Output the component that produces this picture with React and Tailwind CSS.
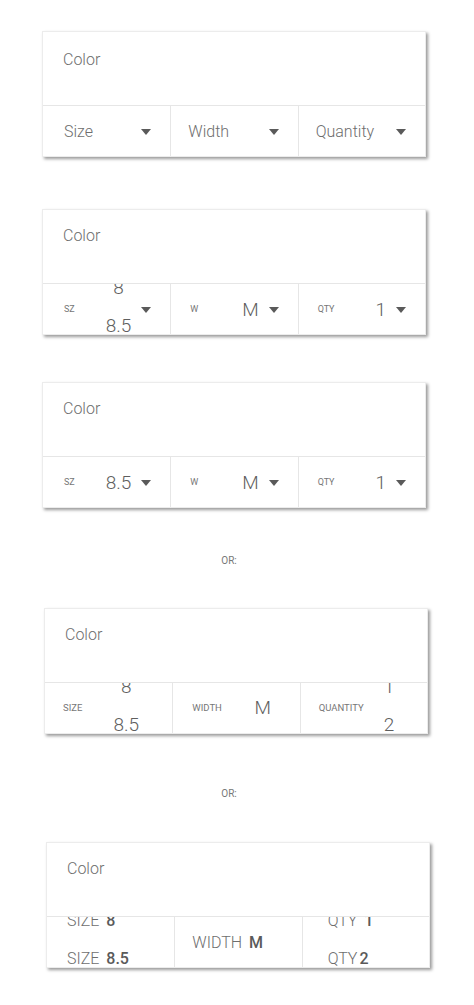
import React from "react";

const font = "font-['Roboto',_'Liberation_Sans',_sans-serif]";

function Caret() {
  return (
    <svg width="10" height="6" viewBox="0 0 10 6" className="shrink-0">
      <polygon points="0,0 10,0 5,6" fill="#5a5a5a" />
    </svg>
  );
}

function Card({ className = "", pad = "pt-[16px]", children }) {
  return (
    <div
      className={`h-[126px] bg-white border border-[#ececec] shadow-[2px_2px_3px_rgba(0,0,0,0.4)] flex flex-col overflow-hidden ${className}`}
    >
      <div className={`h-[73px] shrink-0 pl-[20px] ${pad} text-[16px] leading-[19px] font-light text-[#6e6e6e]`}>
        Color
      </div>
      <div className="h-[51px] shrink-0 grid grid-cols-3 grid-rows-[51px] border-t border-[#e6e6e6]">
        {children}
      </div>
    </div>
  );
}

function Cell({ first, className = "", children }) {
  return (
    <div
      className={`relative h-[51px] min-h-0 overflow-hidden flex items-center ${first ? "" : "border-l border-[#e6e6e6]"} ${className}`}
    >
      {children}
    </div>
  );
}

// stacked values that spill past the row, like a picker wheel
function Wheel({ items, className = "" }) {
  return (
    <div className={`flex flex-col items-center -translate-y-[3px] ${className}`}>
      {items.map((v) => (
        <div key={v} className="h-[38px] leading-[38px] shrink-0">
          {v}
        </div>
      ))}
    </div>
  );
}

function Select({ first, label, items }) {
  return (
    <Cell first={first} className={`${first ? "pl-[21px]" : "pl-[19px]"} pr-[19px]`}>
      <span className="text-[9px] text-[#777] font-normal">{label}</span>
      <div className="ml-auto flex items-center gap-[10px] h-full">
        {items.length > 1 ? (
          <Wheel items={items} className="text-[19px] text-[#5e5e5e]" />
        ) : (
          <span className="text-[19px] text-[#5e5e5e] leading-none">{items[0]}</span>
        )}
        <Caret />
      </div>
    </Cell>
  );
}

export default function App() {
  return (
    <div className={`${font} bg-white min-h-[1005px] pt-[31px] font-light`}>
      {/* plain dropdowns */}
      <Card className="ml-[42px] w-[384px]" pad="pt-[18px]">
        {[
          ["Size", true],
          ["Width", false],
          ["Quantity", false],
        ].map(([t, first]) => (
          <Cell
            key={t}
            first={first}
            className={`${first ? "pl-[21px]" : "pl-[17px]"} pr-[19px] justify-between`}
          >
            <span className="text-[16px] text-[#6e6e6e]">{t}</span>
            <Caret />
          </Cell>
        ))}
      </Card>

      {/* open size list */}
      <Card className="ml-[42px] w-[384px] mt-[52px]">
        <Select first label="SZ" items={["8", "8.5"]} />
        <Select label="W" items={["M"]} />
        <Select label="QTY" items={["1"]} />
      </Card>

      {/* selected */}
      <Card className="ml-[42px] w-[384px] mt-[47px]">
        <Select first label="SZ" items={["8.5"]} />
        <Select label="W" items={["M"]} />
        <Select label="QTY" items={["1"]} />
      </Card>

      <div className="h-[100px] flex items-center justify-center pt-[4px] pr-[16px] text-[10px] text-[#777] font-normal">
        OR:
      </div>

      <Card className="ml-[44px] w-[384px]">
        <Cell first className="pl-[18px]">
          <span className="text-[9.5px] text-[#777] font-normal">SIZE</span>
          <Wheel items={["8", "8.5"]} className="ml-auto mr-[26px] w-[40px] text-[19px] text-[#5e5e5e]" />
        </Cell>
        <Cell className="pl-[19px]">
          <span className="text-[9.5px] text-[#777] font-normal">WIDTH</span>
          <span className="ml-auto mr-[17px] w-[40px] text-center text-[19px] text-[#5e5e5e]">M</span>
        </Cell>
        <Cell className="pl-[18px]">
          <span className="text-[9.5px] text-[#777] font-normal">QUANTITY</span>
          <Wheel items={["1", "2"]} className="ml-auto mr-[18px] w-[40px] text-[19px] text-[#5e5e5e]" />
        </Cell>
      </Card>

      <div className="h-[108px] flex items-center justify-center pt-[10px] pr-[16px] text-[10px] text-[#777] font-normal">
        OR:
      </div>

      <Card className="ml-[46px] w-[384px]">
        <Cell first className="pl-[20px]">
          <div className="flex flex-col -translate-y-[3px] text-[16px] text-[#6e6e6e]">
            <div className="h-[38px] leading-[38px] shrink-0">
              SIZE <span className="ml-[3px] font-medium text-[#5a5a5a]">8</span>
            </div>
            <div className="h-[38px] leading-[38px] shrink-0">
              SIZE <span className="ml-[3px] font-medium text-[#5a5a5a]">8.5</span>
            </div>
          </div>
        </Cell>
        <Cell className="pl-[17px]">
          <span className="text-[16px] text-[#6e6e6e]">
            WIDTH <span className="ml-[3px] font-medium text-[#5a5a5a]">M</span>
          </span>
        </Cell>
        <Cell className="pl-[25px]">
          <div className="flex flex-col -translate-y-[3px] text-[16px] text-[#6e6e6e]">
            <div className="h-[38px] leading-[38px] shrink-0">
              QTY <span className="ml-[3px] font-medium text-[#5a5a5a]">1</span>
            </div>
            <div className="h-[38px] leading-[38px] shrink-0">
              QTY<span className="ml-[2px] font-medium text-[#5a5a5a]">2</span>
            </div>
          </div>
        </Cell>
      </Card>
    </div>
  );
}
